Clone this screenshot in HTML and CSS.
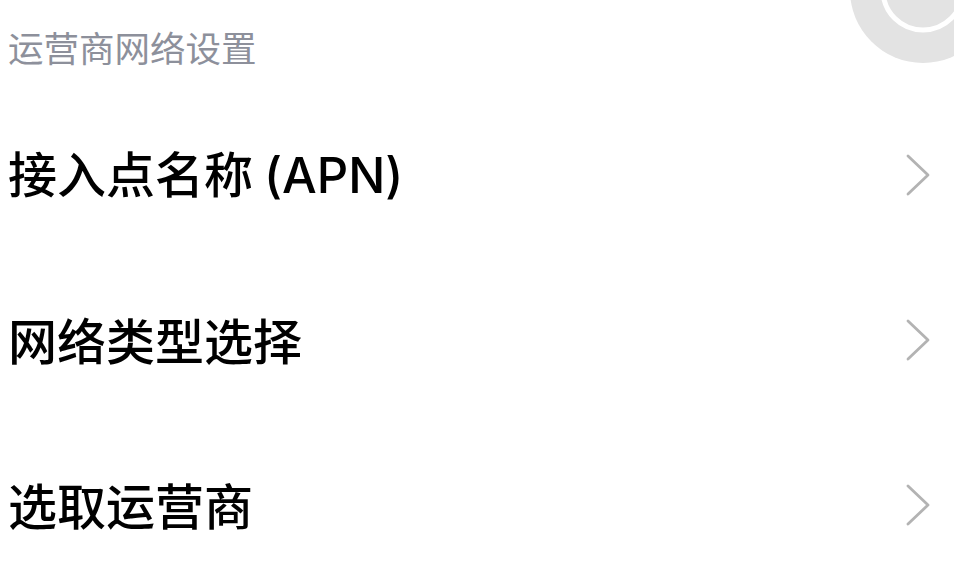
FILE: index.html
```html
<!DOCTYPE html>
<html lang="zh-CN">
<head>
<meta charset="utf-8">
<title>运营商网络设置</title>
<link rel="stylesheet" href="styles.css">
</head>
<body>
<div class="page">
  <div class="blob" aria-hidden="true">
    <svg width="160" height="90" viewBox="0 0 160 90">
      <circle cx="83" cy="-10" r="73" fill="#e3e3e3"/>
      <circle cx="83" cy="-10" r="40" fill="none" stroke="#ffffff" stroke-width="5"/>
    </svg>
  </div>
  <header class="section-title">运营商网络设置</header>
  <ul class="list">
    <li class="row">
      <span class="label">接入点名称 <span class="latin">(APN)</span></span>
      <svg class="chev" width="26" height="42" viewBox="0 0 26 42"><path d="M3 2 L23 21 L3 40" fill="none" stroke="#b3b3b3" stroke-width="2.8" stroke-linecap="round" stroke-linejoin="round"/></svg>
    </li>
    <li class="row">
      <span class="label">网络类型选择</span>
      <svg class="chev" width="26" height="42" viewBox="0 0 26 42"><path d="M3 2 L23 21 L3 40" fill="none" stroke="#b3b3b3" stroke-width="2.8" stroke-linecap="round" stroke-linejoin="round"/></svg>
    </li>
    <li class="row">
      <span class="label">选取运营商</span>
      <svg class="chev" width="26" height="42" viewBox="0 0 26 42"><path d="M3 2 L23 21 L3 40" fill="none" stroke="#b3b3b3" stroke-width="2.8" stroke-linecap="round" stroke-linejoin="round"/></svg>
    </li>
  </ul>
</div>
</body>
</html>
```

FILE: styles.css
```css
html, body {
  margin: 0;
  padding: 0;
  background: #ffffff;
}
.page {
  position: relative;
  width: 954px;
  height: 581px;
  overflow: hidden;
  font-family: "Noto Sans CJK SC", "Noto Sans", sans-serif;
}
.blob {
  position: absolute;
  top: 0;
  left: 840px;
  width: 160px;
  height: 90px;
  line-height: 0;
}
.blob svg {
  display: block;
}
.section-title {
  height: 92px;
  display: flex;
  align-items: center;
  padding-left: 8px;
  font-size: 35.5px;
  color: #8d909b;
  font-weight: 400;
}
.list {
  list-style: none;
  margin: 0;
  padding: 0;
}
.row {
  height: 165px;
  display: flex;
  align-items: center;
  justify-content: space-between;
  padding: 0 23px 0 8px;
}
.label {
  font-family: "Noto Sans CJK SC", sans-serif;
  font-size: 49px;
  font-weight: 500;
  color: #000000;
  line-height: 1.2;
}
.latin {
  font-family: Inter, "Noto Sans", sans-serif;
  font-weight: 500;
}
.chev {
  display: block;
  flex: none;
}
```
